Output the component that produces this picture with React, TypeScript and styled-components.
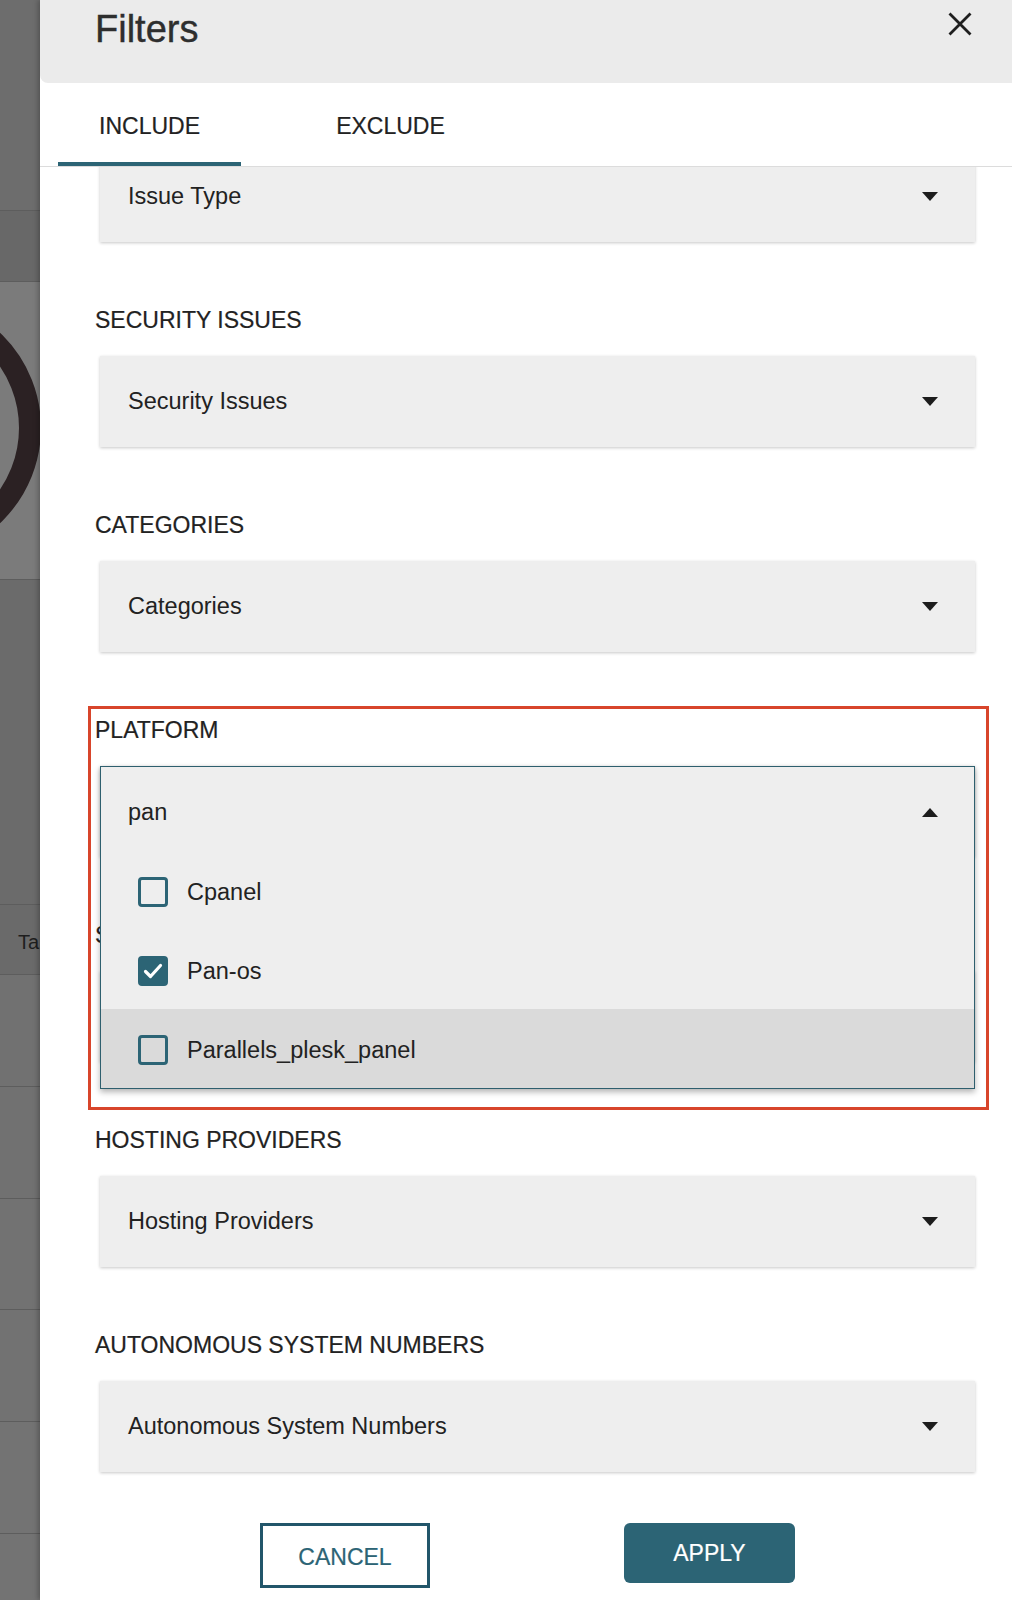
import React from "react";
import styled, { createGlobalStyle } from "styled-components";

const TEAL = "#2c6475";

const GlobalStyle = createGlobalStyle`
  html, body { margin: 0; padding: 0; }
  body { font-family: "Liberation Sans", Arial, sans-serif; color: #222; }
  * { box-sizing: border-box; }
`;

const Page = styled.div`
  display: flex;
  width: 1012px;
  height: 1600px;
  overflow: hidden;
  background: #6c6c6c;
`;

const Backdrop = styled.div`
  width: 40px;
  flex: none;
  display: flex;
  flex-direction: column;
  overflow: hidden;
`;

const BgRow = styled.div<{ $h: number; $bg: string }>`
  flex: none;
  height: ${(p) => p.$h}px;
  background: ${(p) => p.$bg};
  border-bottom: 1px solid #5d5d5d;
  overflow: hidden;
  display: flex;
  align-items: center;
`;

const BgText = styled.span`
  font-size: 20px;
  color: #1e1e1e;
  padding-left: 18px;
  padding-top: 6px;
  white-space: nowrap;
`;

const Panel = styled.div`
  flex: 1;
  display: flex;
  flex-direction: column;
  background: #fff;
  box-shadow: -2px 0 5px rgba(0, 0, 0, 0.25);
  position: relative;
  z-index: 1;
`;

const Header = styled.header`
  flex: none;
  height: 83px;
  background: #ebebeb;
  border-bottom-left-radius: 8px;
  display: flex;
  align-items: flex-start;
  justify-content: space-between;
  padding: 7px 40px 0 55px;
`;

const Title = styled.h1`
  margin: 0;
  font-size: 38px;
  line-height: 44px;
  font-weight: 400;
  color: #2e2e2e;
  -webkit-text-stroke: 0.4px #2e2e2e;
`;

const CloseButton = styled.button`
  border: none;
  background: none;
  padding: 0;
  margin-top: 5px;
  width: 24px;
  height: 24px;
  display: flex;
  cursor: pointer;
`;

const Tabs = styled.nav`
  flex: none;
  height: 84px;
  display: flex;
  gap: 58px;
  padding-left: 18px;
  border-bottom: 1px solid #dcdcdc;
`;

const Tab = styled.div<{ $active?: boolean }>`
  width: 183px;
  height: 83px;
  padding-top: 8px;
  display: flex;
  align-items: center;
  justify-content: center;
  font-size: 23px;
  color: #222;
  -webkit-text-stroke: 0.2px #222;
  border-bottom: 4px solid ${(p) => (p.$active ? TEAL : "transparent")};
`;

const Body = styled.div`
  flex: 1;
  overflow: hidden;
`;

const Scroll = styled.div`
  margin-top: -16px;
  padding: 0 37px 0 55px;
  display: flex;
  flex-direction: column;
`;

const Section = styled.section`
  position: relative;
  display: flex;
  flex-direction: column;
  & + & {
    margin-top: 65px;
  }
`;

const Label = styled.div`
  font-size: 23px;
  line-height: 26px;
  color: #222;
  -webkit-text-stroke: 0.2px #222;
  margin-bottom: 23px;
`;

const SelectBox = styled.div`
  position: relative;
  height: 91px;
  margin-left: 5px;
  background: #eeeeee;
  box-shadow: 0 1px 3px rgba(0, 0, 0, 0.22);
  display: flex;
  align-items: center;
  justify-content: space-between;
  padding: 0 37px 0 28px;
  font-size: 23.5px;
  color: #222;
`;

const Menu = styled.div`
  position: absolute;
  left: 0;
  right: 0;
  top: 0;
  z-index: 2;
  border: 1px solid #2e5f6e;
  background: #eeeeee;
  box-shadow: 0 3px 6px rgba(0, 0, 0, 0.3);
`;

const MenuHeader = styled.div`
  height: 84px;
  padding: 6px 36px 0 27px;
  display: flex;
  align-items: center;
  justify-content: space-between;
`;

const Option = styled.div<{ $highlight?: boolean }>`
  height: 79px;
  display: flex;
  align-items: center;
  gap: 19px;
  padding: 3px 0 0 37px;
  background: ${(p) => (p.$highlight ? "#dadada" : "transparent")};
`;

const Check = styled.span<{ $checked?: boolean }>`
  width: 30px;
  height: 30px;
  flex: none;
  border: 3px solid ${TEAL};
  border-radius: 4px;
  background: ${(p) => (p.$checked ? TEAL : "transparent")};
  display: flex;
  align-items: center;
  justify-content: center;
`;

const Annotation = styled.div`
  position: absolute;
  left: -7px;
  top: -11px;
  width: 901px;
  height: 404px;
  border: 3px solid #d8452b;
  pointer-events: none;
  z-index: 3;
`;

const ButtonRow = styled.div`
  display: flex;
  align-items: flex-start;
  gap: 194px;
  margin-top: 51px;
  padding-left: 165px;
`;

const CancelButton = styled.button`
  width: 170px;
  height: 65px;
  border: 3px solid #22566a;
  background: #fff;
  color: ${TEAL};
  font-family: inherit;
  font-size: 23px;
  -webkit-text-stroke: 0.2px ${TEAL};
  padding: 4px 0 0;
`;

const ApplyButton = styled.button`
  width: 171px;
  height: 60px;
  border: none;
  border-radius: 6px;
  background: ${TEAL};
  color: #fff;
  font-family: inherit;
  font-size: 23px;
  -webkit-text-stroke: 0.2px #fff;
`;

const Caret = ({ up }: { up?: boolean }) => (
  <svg width="16" height="10" viewBox="0 0 16 10">
    <polygon points={up ? "0,10 16,10 8,1" : "0,0 16,0 8,9"} fill="#1c1c1c" />
  </svg>
);

const Tick = () => (
  <svg width="22" height="22" viewBox="0 0 22 22">
    <path d="M3.5 11.5 L8.5 16.5 L18.5 5.5" fill="none" stroke="#fff" strokeWidth="3.2" strokeLinecap="round" strokeLinejoin="round" />
  </svg>
);

const FilterSelect = ({ label, placeholder }: { label?: string; placeholder: string }) => (
  <Section>
    {label && <Label>{label}</Label>}
    <SelectBox>
      <span>{placeholder}</span>
      <Caret />
    </SelectBox>
  </Section>
);

const options = [
  { name: "Cpanel", checked: false, hl: false },
  { name: "Pan-os", checked: true, hl: false },
  { name: "Parallels_plesk_panel", checked: false, hl: true },
];

const bgRows = [
  { h: 211, bg: "#6d6d6d" },
  { h: 71, bg: "#686868" },
  { h: 298, bg: "#7b7b7b", ring: true },
  { h: 325, bg: "#6b6b6b" },
  { h: 70, bg: "#6a6a6a", text: "Ta" },
  { h: 112, bg: "#717171" },
  { h: 112, bg: "#717171" },
  { h: 111, bg: "#727272" },
  { h: 112, bg: "#727272" },
  { h: 112, bg: "#737373" },
  { h: 112, bg: "#737373" },
];

export default function App() {
  return (
    <>
      <GlobalStyle />
      <Page>
        <Backdrop>
          {bgRows.map((r, i) => (
            <BgRow key={i} $h={r.h} $bg={r.bg}>
              {r.ring && (
                <svg width="40" height="298" viewBox="0 0 40 298">
                  <circle cx="-90" cy="146" r="120" fill="none" stroke="#2b2123" strokeWidth="22" />
                </svg>
              )}
              {r.text && <BgText>{r.text}</BgText>}
            </BgRow>
          ))}
        </Backdrop>
        <Panel>
          <Header>
            <Title>Filters</Title>
            <CloseButton aria-label="Close">
              <svg width="24" height="24" viewBox="0 0 24 24">
                <path d="M1.5 1.5 L22.5 22.5 M22.5 1.5 L1.5 22.5" stroke="#1e1e1e" strokeWidth="2.8" />
              </svg>
            </CloseButton>
          </Header>
          <Tabs>
            <Tab $active>INCLUDE</Tab>
            <Tab>EXCLUDE</Tab>
          </Tabs>
          <Body>
            <Scroll>
              <FilterSelect placeholder="Issue Type" />
              <FilterSelect label="SECURITY ISSUES" placeholder="Security Issues" />
              <FilterSelect label="CATEGORIES" placeholder="Categories" />
              <Section>
                <Annotation />
                <Label>PLATFORM</Label>
                <SelectBox>
                  <Menu>
                    <MenuHeader>
                      <span>pan</span>
                      <Caret up />
                    </MenuHeader>
                    {options.map((o) => (
                      <Option key={o.name} $highlight={o.hl}>
                        <Check $checked={o.checked}>{o.checked && <Tick />}</Check>
                        <span>{o.name}</span>
                      </Option>
                    ))}
                  </Menu>
                </SelectBox>
              </Section>
              <FilterSelect label="SEVERITY" placeholder="Severity" />
              <FilterSelect label="HOSTING PROVIDERS" placeholder="Hosting Providers" />
              <FilterSelect label="AUTONOMOUS SYSTEM NUMBERS" placeholder="Autonomous System Numbers" />
              <ButtonRow>
                <CancelButton>CANCEL</CancelButton>
                <ApplyButton>APPLY</ApplyButton>
              </ButtonRow>
            </Scroll>
          </Body>
        </Panel>
      </Page>
    </>
  );
}
